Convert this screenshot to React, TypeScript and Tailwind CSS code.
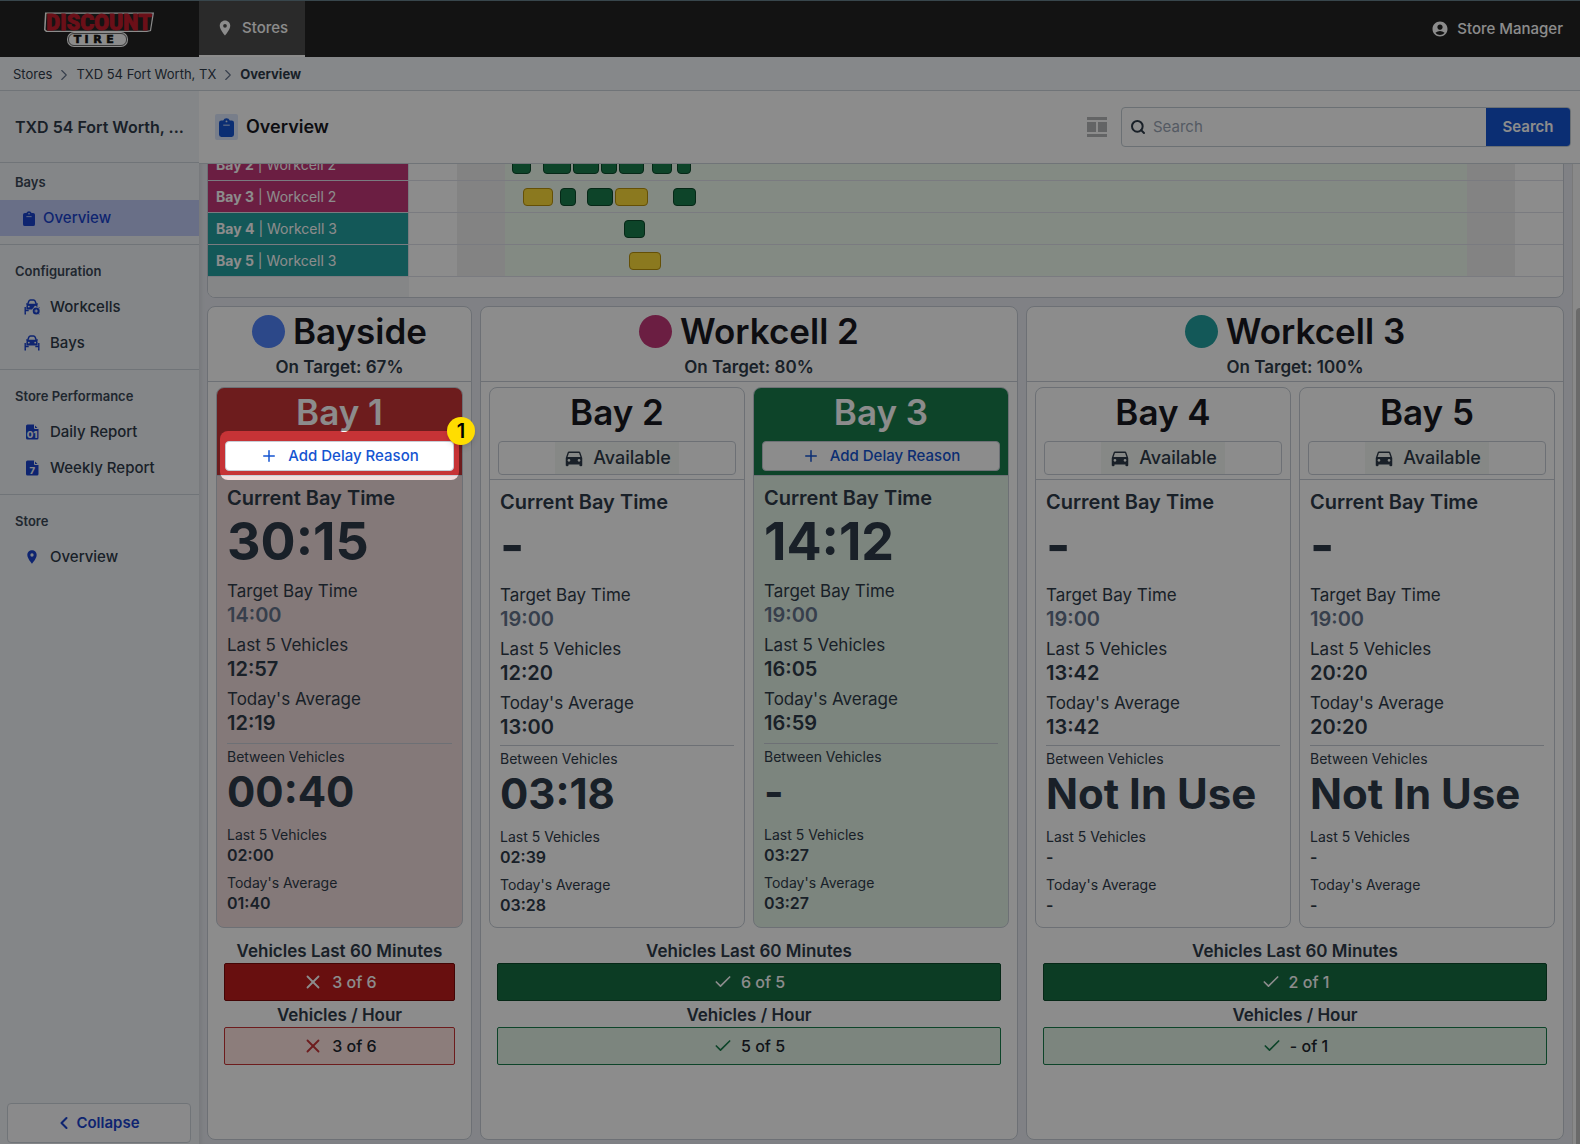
import { useLayoutEffect, useRef, useState } from "react";
import type { ReactNode, RefObject } from "react";
import { Check, ChevronLeft, ChevronRight, Plus, Search, X } from "lucide-react";
import { MdAccountCircle, MdDirectionsCar, MdLocationOn } from "react-icons/md";

type Status = "late" | "onTrack" | "idle";

type Bay = {
  name: string;
  status: Status;
  current: string;
  target: string;
  lastFive: string;
  average: string;
  between: string;
  betweenLastFive: string;
  betweenAverage: string;
};

type Workcell = {
  name: string;
  dot: string;
  span: string;
  onTarget: string;
  lastHour: string;
  perHour: string;
  met: boolean;
  bays: Bay[];
};

const workcells: Workcell[] = [
  {
    name: "Bayside",
    dot: "bg-[#5083f9]",
    span: "col-span-1",
    onTarget: "67%",
    lastHour: "3 of 6",
    perHour: "3 of 6",
    met: false,
    bays: [
      { name: "Bay 1", status: "late", current: "30:15", target: "14:00", lastFive: "12:57", average: "12:19", between: "00:40", betweenLastFive: "02:00", betweenAverage: "01:40" }
    ]
  },
  {
    name: "Workcell 2",
    dot: "bg-[#c43878]",
    span: "col-span-2",
    onTarget: "80%",
    lastHour: "6 of 5",
    perHour: "5 of 5",
    met: true,
    bays: [
      { name: "Bay 2", status: "idle", current: "-", target: "19:00", lastFive: "12:20", average: "13:00", between: "03:18", betweenLastFive: "02:39", betweenAverage: "03:28" },
      { name: "Bay 3", status: "onTrack", current: "14:12", target: "19:00", lastFive: "16:05", average: "16:59", between: "-", betweenLastFive: "03:27", betweenAverage: "03:27" }
    ]
  },
  {
    name: "Workcell 3",
    dot: "bg-[#24a0a0]",
    span: "col-span-2",
    onTarget: "100%",
    lastHour: "2 of 1",
    perHour: "- of 1",
    met: true,
    bays: [
      { name: "Bay 4", status: "idle", current: "-", target: "19:00", lastFive: "13:42", average: "13:42", between: "Not In Use", betweenLastFive: "-", betweenAverage: "-" },
      { name: "Bay 5", status: "idle", current: "-", target: "19:00", lastFive: "20:20", average: "20:20", between: "Not In Use", betweenLastFive: "-", betweenAverage: "-" }
    ]
  }
];

// visits are [start, end, tone] in minutes from the left edge of the 24 hour axis
type Visit = [number, number, "green" | "yellow"];

const timeline: { bay: string; workcell: string; color: string; visits: Visit[] }[] = [
  {
    bay: "Bay 2",
    workcell: "Workcell 2",
    color: "bg-[#c43878]",
    visits: [
      [128, 152, "green"],
      [167, 202, "green"],
      [205, 237, "green"],
      [239, 259, "green"],
      [262, 293, "green"],
      [303, 328, "green"],
      [335, 352, "green"]
    ]
  },
  {
    bay: "Bay 3",
    workcell: "Workcell 2",
    color: "bg-[#c43878]",
    visits: [
      [142, 180, "yellow"],
      [188, 209, "green"],
      [222, 255, "green"],
      [257, 298, "yellow"],
      [330, 358, "green"]
    ]
  },
  { bay: "Bay 4", workcell: "Workcell 3", color: "bg-[#24a0a0]", visits: [[268, 295, "green"]] },
  { bay: "Bay 5", workcell: "Workcell 3", color: "bg-[#24a0a0]", visits: [[274, 314, "yellow"]] }
];

const visitTones = {
  green: "border-[#0b4a2b] bg-[#187c4b]",
  yellow: "border-[#b8920c] bg-[#fddc3a]"
};

const cardStyles = {
  late: "bg-[#f1dcdc]",
  onTrack: "bg-[#e2f2e6]",
  idle: "bg-white"
};

const headStyles = {
  late: "bg-[#c63336] text-white",
  onTrack: "bg-[#187c4b] text-white",
  idle: "text-[#18191f]"
};

function Logo() {
  return (
    <svg className="h-11 w-30" viewBox="0 0 120 44" role="img" aria-label="Discount Tire">
      <g fontWeight="900" textAnchor="middle">
        <path d="M5 5.500h109l-3 18.500-4 1H6L4 23z" fill="#ffffff" />
        <path d="M6.500 6.700h106l-2.500 16.600-3 .500H7L5.500 22.500z" fill="#242424" />
        <text x="59" y="22.500" fontSize="21.500" fontFamily="Roboto, sans-serif" fill="#c41c2c" stroke="#c41c2c" strokeWidth="0.800">
          DISCOUNT
        </text>
        <rect x="27" y="25" width="61" height="15" rx="7" fill="#ffffff" />
        <rect x="28.500" y="26.500" width="58" height="12" rx="5.500" fill="none" stroke="#242424" strokeWidth="0.700" />
        <text x="37.500 46.500 57.500 70" y="36.300" fontSize="11" fontFamily="DejaVu Sans, sans-serif" fill="#141414" stroke="#141414" strokeWidth="0.600">
          TIRE
        </text>
      </g>
    </svg>
  );
}

function ClipboardIcon({ className }: { className: string }) {
  return (
    <svg className={className} viewBox="0 0 16 20" aria-hidden="true">
      <path d="M2.500 2.500H4.500a3.800 3.800 0 0 1 7 0h2A2.500 2.500 0 0 1 16 5v12.500a2.500 2.500 0 0 1-2.500 2.500h-11A2.500 2.500 0 0 1 0 17.500V5A2.500 2.500 0 0 1 2.500 2.500z" fill="currentColor" />
      <circle cx="8" cy="3.500" r="1" fill="#dbe6fb" />
      <path d="M4.500 7.500h7" stroke="#dbe6fb" strokeWidth="1" />
    </svg>
  );
}

function BayIcon({ gear }: { gear?: boolean }) {
  return (
    <svg className="h-4 w-4" viewBox="0 0 16 16" aria-hidden="true">
      <path d="M3.800 5 4.800 2.200C5.100 1.400 5.600 1 6.500 1h3c.9 0 1.400.4 1.700 1.200l1 2.800" fill="none" stroke="currentColor" strokeWidth="1.500" />
      <path d="M2.200 4.200h1.300v.6h9v-.6h1.300v1.300l-.6.400.4.800v3.800H2.400V6.700l.4-.8-.6-.4z" fill="currentColor" />
      <path d="M1.200 8v7M14.800 8v7M.500 14.700h1.500m12 0h1.500M1.200 11.500h3.500m6.600 0h3.500" stroke="currentColor" strokeWidth="1.400" />
      <circle cx="4.800" cy="7.600" r=".9" fill="#f1f4f8" />
      <circle cx="11.200" cy="7.600" r=".9" fill="#f1f4f8" />
      {gear && (
        <>
          <circle cx="12.200" cy="12" r="4.400" fill="#f1f4f8" />
          <circle cx="12.200" cy="12" r="3.500" fill="currentColor" />
          <path d="M12.200 10.400v3.200m-1.600-1.600h3.200" stroke="#f1f4f8" strokeWidth="1" />
        </>
      )}
    </svg>
  );
}

function ReportIcon({ label }: { label: string }) {
  return (
    <svg className="h-4 w-4" viewBox="0 0 16 16" aria-hidden="true">
      <path d="M3.500.500H10L14.500 5v9a1.500 1.500 0 0 1-1.500 1.500H3.500A1.500 1.500 0 0 1 2 14V2A1.500 1.500 0 0 1 3.500.500z" fill="currentColor" />
      <path d="M10.500 .500V4.500h4" fill="none" stroke="#f1f4f8" />
      <text x="8.200" y="13.500" fontSize="9.500" fontWeight="800" textAnchor="middle" fill="#f1f4f8" fontFamily="Inter, sans-serif">
        {label}
      </text>
    </svg>
  );
}

function NavGroup({ title, first, children }: { title: string; first?: boolean; children: ReactNode }) {
  return (
    <section className={first ? "pt-[9px] pb-2" : "border-t border-[#cdd3db] pt-4 pb-2"}>
      <h2 className="mb-2 px-[15px] text-[13px] leading-5 font-semibold text-[#3b4857]">{title}</h2>
      {children}
    </section>
  );
}

function NavItem({ icon, children }: { icon: ReactNode; children: ReactNode }) {
  return (
    <a href="#" className="flex h-9 items-center gap-2.5 px-6 text-[15px] font-medium text-[#2f3b49]">
      <span className="text-[#1a43cd]">{icon}</span>
      {children}
    </a>
  );
}

function Sidebar() {
  return (
    <aside className="flex w-[199px] shrink-0 flex-col bg-[#f1f4f8]">
      <div className="flex h-[72px] shrink-0 items-center border-b border-[#cdd3db] px-[15px] text-base font-semibold text-[#2f3b49]">
        TXD 54 Fort Worth, ...
      </div>
      <nav className="flex-1">
        <NavGroup title="Bays" first>
          <a href="#" className="flex h-9 items-center gap-2 bg-[#bfcaf6] px-[23px] text-[15px] font-medium text-[#1a43cd]">
            <ClipboardIcon className="h-[15px] w-3" />
            Overview
          </a>
        </NavGroup>
        <NavGroup title="Configuration">
          <NavItem icon={<BayIcon gear />}>Workcells</NavItem>
          <NavItem icon={<BayIcon />}>Bays</NavItem>
        </NavGroup>
        <NavGroup title="Store Performance">
          <NavItem icon={<ReportIcon label="01" />}>Daily Report</NavItem>
          <NavItem icon={<ReportIcon label="7" />}>Weekly Report</NavItem>
        </NavGroup>
        <NavGroup title="Store">
          <NavItem icon={<MdLocationOn className="h-[18px] w-4" />}>Overview</NavItem>
        </NavGroup>
      </nav>
      <button className="mr-2 mb-px ml-[7px] flex h-10 items-center justify-center gap-0.5 rounded border border-[#cdd3db] bg-[#fbfcfd] pr-1 text-[15px] font-semibold text-[#1a43cd]">
        <ChevronLeft className="h-5 w-5" strokeWidth={2.500} aria-hidden="true" />
        Collapse
      </button>
    </aside>
  );
}

function Timeline() {
  return (
    <section className="-mt-4 shrink-0 overflow-hidden rounded-b-lg border border-[#c6cdd6] bg-white" aria-label="Bay timeline">
      {timeline.map((row) => (
        <div key={row.bay} className="flex h-8 border-b border-[#dfe0ea]">
          <div className={`flex w-[200px] shrink-0 items-center gap-1 px-2 text-sm text-white ${row.color}`}>
            <b className="font-bold">{row.bay}</b>
            <span>|</span>
            <span>{row.workcell}</span>
          </div>
          <div className="relative flex flex-1 border-l border-[#dfe0ea]">
            <span className="flex-1" />
            <span className="flex-1 bg-[#efefef]" />
            <span className="flex-[20] bg-[#effcee]" />
            <span className="flex-1 bg-[#efefef]" />
            <span className="flex-1" />
            {row.visits.map(([start, end, tone]) => (
              <span
                key={start}
                className={`absolute top-[7px] h-[18px] rounded border ${visitTones[tone]}`}
                style={{ left: `${(start / 1440) * 100}%`, width: `${((end - start) / 1440) * 100}%` }}
              />
            ))}
          </div>
        </div>
      ))}
      <div className="flex h-5">
        <div className="w-[201px] bg-[#f3f4f6]" />
      </div>
    </section>
  );
}

function Metric({ label, value, muted, small }: { label: string; value: string; muted?: boolean; small?: boolean }) {
  return (
    <div>
      <p className={small ? "text-sm leading-5" : "text-[17px] leading-6"}>{label}</p>
      <p className={`font-semibold ${small ? "text-base leading-5" : "text-xl leading-6"} ${muted ? "text-[#64748b]" : ""}`}>{value}</p>
    </div>
  );
}

function BayCard({ bay, delayRef }: { bay: Bay; delayRef?: RefObject<HTMLButtonElement | null> }) {
  return (
    <article className={`flex flex-1 flex-col overflow-hidden rounded-lg border border-[#c6cdd6] ${cardStyles[bay.status]}`}>
      <header className={`border-b border-[#c6cdd6] px-2 pb-1 text-center ${headStyles[bay.status]}`}>
        <h3 className="mb-[5px] text-[35px] leading-[48px] font-semibold">{bay.name}</h3>
        {bay.status === "idle" ? (
          <div className="flex h-[34px] justify-center rounded-sm border border-[#c6cdd6]">
            <span className="flex items-center gap-2 bg-[#f4f8f5] px-2 text-lg font-medium text-[#2f3b49]">
              <MdDirectionsCar className="h-[22px] w-[22px]" aria-hidden="true" />
              Available
            </span>
          </div>
        ) : (
          <button ref={delayRef} className="flex h-[30px] w-full items-center justify-center gap-2.5 rounded-sm border border-[#c6cdd6] bg-white text-[15px] font-medium text-[#1554d1]">
            <Plus className="h-[18px] w-[18px]" strokeWidth={2} aria-hidden="true" />
            Add Delay Reason
          </button>
        )}
      </header>
      <div className="flex grow flex-col px-2.5 text-[#2f3b49]">
        <div className="grow pt-2 pb-1.5">
          <h4 className="text-xl leading-7 font-semibold">Current Bay Time</h4>
          <p className="text-[52px] leading-[60px] font-bold">{bay.current}</p>
          <div className="mt-[7px] flex flex-col gap-1.5">
            <Metric label="Target Bay Time" value={bay.target} muted />
            <Metric label="Last 5 Vehicles" value={bay.lastFive} />
            <Metric label="Today's Average" value={bay.average} />
          </div>
        </div>
        <div className="grow border-t border-[#c6cdd6] pt-[3px] pb-3">
          <h4 className="text-sm leading-5">Between Vehicles</h4>
          <p className="text-[42px] leading-[50px] font-bold whitespace-nowrap">{bay.between}</p>
          <div className="mt-2 flex flex-col gap-2">
            <Metric small label="Last 5 Vehicles" value={bay.betweenLastFive} />
            <Metric small label="Today's Average" value={bay.betweenAverage} />
          </div>
        </div>
      </div>
    </article>
  );
}

function Throughput({ title, value, met, solid }: { title: string; value: string; met: boolean; solid?: boolean }) {
  const Icon = met ? Check : X;
  const solidTone = met ? "border-[#0b4a2b] bg-[#166d43] text-white" : "border-[#7c0a0a] bg-[#bd1d1d] text-white";
  const softTone = met ? "border-[#187c4b] bg-[#e2f2e6] text-[#20262e]" : "border-[#c63336] bg-[#ffe3e0] text-[#20262e]";
  const iconTone = solid ? "text-white" : met ? "text-[#187c4b]" : "text-[#c63336]";
  return (
    <div className="pt-0.5">
      <h4 className="text-center text-[17px] leading-6 font-semibold text-[#2f3b49]">{title}</h4>
      <div className={`flex h-[38px] items-center justify-center gap-2 rounded-xs border text-base font-medium ${solid ? solidTone : softTone}`}>
        <Icon className={`${met ? "h-5 w-5" : "h-[22px] w-[22px]"} ${iconTone}`} strokeWidth={2} aria-hidden="true" />
        {value}
      </div>
    </div>
  );
}

export default function App() {
  const delayRef = useRef<HTMLButtonElement>(null);
  const [spot, setSpot] = useState<DOMRect | null>(null);

  // keep the tour highlight on the delay button
  useLayoutEffect(() => {
    const place = () => delayRef.current && setSpot(delayRef.current.getBoundingClientRect());
    place();
    document.fonts.ready.then(place);
    window.addEventListener("resize", place);
    return () => window.removeEventListener("resize", place);
  }, []);

  return (
    <div className="relative flex h-screen flex-col overflow-hidden bg-[#e9ecf2] font-[Inter,sans-serif] text-[#2f3b49]">
      <header className="flex h-[57px] shrink-0 border-t border-[#66808a] bg-[#242424] text-[15px] font-medium text-white">
        <div className="flex w-[199px] items-center justify-center">
          <Logo />
        </div>
        <a href="#" className="flex items-center gap-2 border-b-2 border-white bg-[#4e4e4e] px-[17px]">
          <MdLocationOn className="h-[18px] w-[18px]" aria-hidden="true" />
          Stores
        </a>
        <button className="ml-auto flex items-center gap-2 px-[17px]">
          <MdAccountCircle className="h-[18px] w-[18px]" aria-hidden="true" />
          Store Manager
        </button>
      </header>

      <nav className="flex h-[34px] shrink-0 items-center gap-[3px] border-b border-[#cdd3db] bg-[#f5f7fb] px-[13px] pt-0.5 text-[13px]" aria-label="Breadcrumb">
        <a href="#">Stores</a>
        <ChevronRight className="h-[18px] w-[18px] text-[#64748b]" strokeWidth={1.500} aria-hidden="true" />
        <a href="#">TXD 54 Fort Worth, TX</a>
        <ChevronRight className="h-[18px] w-[18px] text-[#64748b]" strokeWidth={1.500} aria-hidden="true" />
        <span className="font-bold">Overview</span>
      </nav>

      <div className="flex min-h-0 flex-1">
        <Sidebar />
        <main className="flex min-w-0 flex-1 flex-col">
          <div className="z-10 flex h-[73px] shrink-0 items-center border-b border-[#cdd3db] bg-white pr-[9px] pl-4">
            <span className="flex h-[26px] w-[23px] items-center justify-center rounded-xs bg-[#dbe6fb] text-[#1554d1]">
              <ClipboardIcon className="h-[19px] w-[15px]" />
            </span>
            <h1 className="ml-2 text-lg font-semibold text-[#18191f]">Overview</h1>
            <button className="ml-auto" aria-label="Change layout">
              <svg className="h-5 w-5 text-[#b4b6b9]" viewBox="0 0 20 20" fill="currentColor" aria-hidden="true">
                <path d="M0 0h20v3H0zM0 5h9v10H0zM11 5h9v10h-9zM0 17h20v3H0z" />
              </svg>
            </button>
            <form className="ml-3.5 flex h-10 w-[450px] overflow-hidden rounded border border-[#c3cdd3]">
              <label className="flex flex-1 items-center gap-[7px] pl-2">
                <Search className="h-4 w-4" strokeWidth={3} aria-hidden="true" />
                <input type="text" placeholder="Search" aria-label="Search" className="min-w-0 flex-1 text-[15px] outline-none placeholder:text-[#9aa5b5]" />
              </label>
              <button type="submit" className="w-[84px] bg-[#1554d1] text-[15px] font-semibold text-white">
                Search
              </button>
            </form>
          </div>

          <div className="flex min-h-0 flex-1">
            <div className="flex min-w-0 flex-1 flex-col gap-2 overflow-hidden px-2 shadow-[inset_4px_0_4px_-2px_rgba(0,0,0,0.08)]">
              <Timeline />
              <div className="grid shrink-0 grid-cols-5 gap-2">
                {workcells.map((cell) => (
                  <section key={cell.name} className={`flex flex-col rounded-lg border border-[#c6cdd6] bg-white ${cell.span}`}>
                    <header className="border-b border-[#c6cdd6] pb-1 text-center">
                      <h2 className="mb-0.5 flex items-center justify-center gap-2 text-[35px] leading-[48px] font-semibold text-[#18191f]">
                        <span className={`h-[33px] w-[33px] rounded-full ${cell.dot}`} />
                        {cell.name}
                      </h2>
                      <p className="text-[17px] leading-5 font-semibold">On Target: {cell.onTarget}</p>
                    </header>
                    <div className="flex grow gap-2 px-2 pt-[5px]">
                      {cell.bays.map((bay) => (
                        <BayCard key={bay.name} bay={bay} delayRef={bay.status === "late" ? delayRef : undefined} />
                      ))}
                    </div>
                    <div className="px-4 pt-[9px] pb-[74px]">
                      <Throughput title="Vehicles Last 60 Minutes" value={cell.lastHour} met={cell.met} solid />
                      <Throughput title="Vehicles / Hour" value={cell.perHour} met={cell.met} />
                    </div>
                  </section>
                ))}
              </div>
            </div>
            <div className="flex w-2 shrink-0 flex-col overflow-hidden border-l border-[#dcdcdc] bg-[#fafafa] pt-36 pl-[3px]">
              <div className="w-2 flex-1 rounded-t-full bg-[#c1c1c1]" />
            </div>
          </div>
        </main>
      </div>

      {spot && (
        <div
          className="pointer-events-none absolute z-20 rounded-lg shadow-[0_0_0_9999px_rgba(0,0,0,0.45)]"
          style={{ left: spot.left - 5, top: spot.top - 10, width: spot.width + 10, height: spot.height + 19 }}
        >
          <span className="absolute -top-3.5 -right-4 flex h-7 w-7 items-center justify-center rounded-full bg-[#ffdd00] text-xl font-semibold text-black shadow-md">1</span>
        </div>
      )}
    </div>
  );
}
